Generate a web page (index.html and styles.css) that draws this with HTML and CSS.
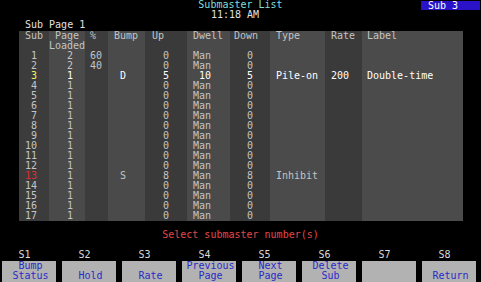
FILE: index.html
```html
<!DOCTYPE html>
<html lang="en">
<head>
    <meta charset="UTF-8">
    <meta name="viewport" content="width=device-width, initial-scale=1.0">
    <title>Submaster List</title>
    <link rel="stylesheet" href="styles.css">
</head>
<body>
    <div class="screen">
        <div class="top">
            <div class="title">Submaster List</div>
            <div class="clock">11:18 AM</div>
            <div class="badge">Sub 3</div>
        </div>

        <div class="page-line">Sub Page 1</div>

        <table class="subs">
            <colgroup>
                <col class="c-sub">
                <col class="c-page">
                <col class="c-pct">
                <col class="c-bump">
                <col class="c-up">
                <col class="c-dwell">
                <col class="c-down">
                <col class="c-type">
                <col class="c-rate">
                <col class="c-label">
            </colgroup>
            <thead>
                <tr>
                    <th>Sub</th>
                    <th>Page<br>Loaded</th>
                    <th>%</th>
                    <th>Bump</th>
                    <th>Up</th>
                    <th>Dwell</th>
                    <th>Down</th>
                    <th>Type</th>
                    <th>Rate</th>
                    <th>Label</th>
                </tr>
            </thead>
            <tbody id="rows"></tbody>
        </table>

        <div class="prompt">Select submaster number(s)</div>

        <div class="softkeys">
            <div class="key"><span class="key-num">S1</span><span class="key-btn">Bump<br>Status</span></div>
            <div class="key"><span class="key-num">S2</span><span class="key-btn"><br>Hold</span></div>
            <div class="key"><span class="key-num">S3</span><span class="key-btn"><br>Rate</span></div>
            <div class="key"><span class="key-num">S4</span><span class="key-btn">Previous<br>Page</span></div>
            <div class="key"><span class="key-num">S5</span><span class="key-btn">Next<br>Page</span></div>
            <div class="key"><span class="key-num">S6</span><span class="key-btn">Delete<br>Sub</span></div>
            <div class="key"><span class="key-num">S7</span><span class="key-btn"><br></span></div>
            <div class="key"><span class="key-num">S8</span><span class="key-btn"><br>Return</span></div>
        </div>
    </div>

    <script>
        // sub, page, %, bump, up, dwell, down, type, rate, label
        const subs = [];
        for (let i = 1; i <= 17; i++) {
            subs.push([i, 1, '', '', 0, 'Man', 0, '', '', '']);
        }
        subs[0][1] = 2; subs[0][2] = 60;
        subs[1][1] = 2; subs[1][2] = 40;
        subs[2] = [3, 1, '', 'D', 5, 10, 5, 'Pile-on', 200, 'Double-time'];
        subs[12] = [13, 1, '', 'S', 8, 'Man', 8, 'Inhibit', '', ''];

        const body = document.getElementById('rows');
        subs.forEach(function (s) {
            const tr = document.createElement('tr');
            if (s[0] === 3) tr.className = 'current';
            if (s[0] === 13) tr.className = 'marked';
            s.forEach(function (v) {
                const td = document.createElement('td');
                td.textContent = v;
                tr.appendChild(td);
            });
            body.appendChild(tr);
        });
    </script>
</body>
</html>
```

FILE: styles.css
```css
html, body { margin: 0; padding: 0; background: #000; overflow: hidden; }
body {
    font-family: "DejaVu Sans Mono", monospace;
    font-size: 10px;
    line-height: 10px;
    color: #c4c4c4;
}
.screen { width: 481px; height: 282px; }

.top { position: relative; height: 20px; }
.title { text-align: center; color: #80dede; }
.clock { text-align: center; padding-right: 11px; color: #e0e0e0; }
.badge {
    position: absolute;
    top: 1px;
    right: 1px;
    width: 52px;
    height: 9px;
    padding-left: 7px;
    background: #2a12c8;
    color: #fff;
    line-height: 9px;
}

.page-line { padding-left: 25px; color: #e0e0e0; }

.subs {
    margin: 1px 0 0 19px;
    border-collapse: collapse;
    table-layout: fixed;
    width: 444px;
}
.subs th, .subs td {
    padding: 0;
    font-weight: normal;
    text-align: left;
    vertical-align: top;
    white-space: pre;
    height: 10px;
}
.c-sub   { width: 30px;  background: #3c3c3c; }
.c-page  { width: 36px;  background: #4a4a4a; }
.c-pct   { width: 23px;  background: #3c3c3c; }
.c-bump  { width: 37px;  background: #4a4a4a; }
.c-up    { width: 42px;  background: #3a3a3a; }
.c-dwell { width: 43px;  background: #4a4a4a; }
.c-down  { width: 40px;  background: #3a3a3a; }
.c-type  { width: 55px;  background: #4b4b4b; }
.c-rate  { width: 37px;  background: #3a3a3a; }
.c-label { width: 101px; background: #4b4b4b; }

/* header offsets */
.subs th:nth-child(1)  { padding-left: 6px; }
.subs th:nth-child(2)  { text-align: center; }
.subs th:nth-child(3)  { padding-left: 5px; }
.subs th:nth-child(4)  { padding-left: 6px; }
.subs th:nth-child(5)  { padding-left: 7px; }
.subs th:nth-child(6)  { padding-left: 6px; }
.subs th:nth-child(7)  { padding-left: 4px; }
.subs th:nth-child(8)  { padding-left: 6px; }
.subs th:nth-child(9)  { padding-left: 6px; }
.subs th:nth-child(10) { padding-left: 5px; }

/* data columns */
.subs td:nth-child(1)  { text-align: right; padding-right: 12px; }
.subs td:nth-child(2)  { text-align: right; padding-right: 12px; }
.subs td:nth-child(3)  { padding-left: 5px; }
.subs td:nth-child(4)  { padding-left: 12px; }
.subs td:nth-child(5)  { text-align: right; padding-right: 18px; }
.subs td:nth-child(6)  { text-align: right; padding-right: 19px; }
.subs td:nth-child(7)  { text-align: right; padding-right: 17px; }
.subs td:nth-child(8)  { padding-left: 6px; }
.subs td:nth-child(9)  { padding-left: 6px; }
.subs td:nth-child(10) { padding-left: 5px; }

.subs tr.current td { color: #fff; }
.subs tr.current td:first-child { color: #f0f060; }
.subs tr.marked td:first-child { color: #d83030; }

.prompt { margin-top: 9px; text-align: center; color: #e04848; }

.softkeys {
    display: flex;
    gap: 6px;
    margin-top: 10px;
    padding-left: 2px;
}
.key { width: 54px; display: flex; flex-direction: column; }
.key-num { text-align: center; padding-right: 9px; color: #dcdcdc; height: 11px; }
.key-btn {
    height: 21px;
    background: #b2b2b2;
    color: #2a2ac8;
    text-align: center;
    padding-left: 3px;
}
```
